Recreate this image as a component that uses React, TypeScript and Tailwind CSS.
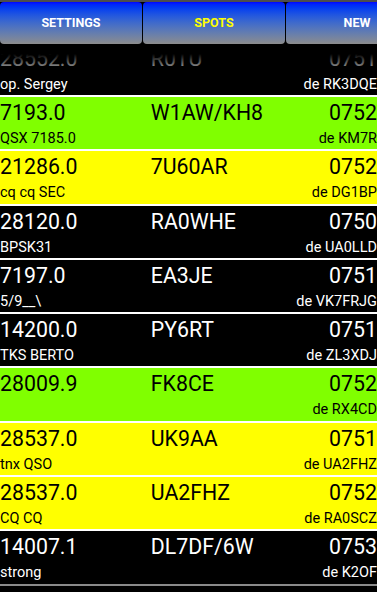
import React from "react";

type Spot = {
  freq: string;
  call: string;
  time: string;
  comment: string;
  de: string;
  color: "black" | "green" | "yellow";
};

const spots: Spot[] = [
  { freq: "28552.0", call: "R0TU", time: "0751", comment: "op. Sergey", de: "de RK3DQE", color: "black" },
  { freq: "7193.0", call: "W1AW/KH8", time: "0752", comment: "QSX 7185.0", de: "de KM7R", color: "green" },
  { freq: "21286.0", call: "7U60AR", time: "0752", comment: "cq cq SEC", de: "de DG1BP", color: "yellow" },
  { freq: "28120.0", call: "RA0WHE", time: "0750", comment: "BPSK31", de: "de UA0LLD", color: "black" },
  { freq: "7197.0", call: "EA3JE", time: "0751", comment: "5/9__\\", de: "de VK7FRJG", color: "black" },
  { freq: "14200.0", call: "PY6RT", time: "0751", comment: "TKS BERTO", de: "de ZL3XDJ", color: "black" },
  { freq: "28009.9", call: "FK8CE", time: "0752", comment: "", de: "de RX4CD", color: "green" },
  { freq: "28537.0", call: "UK9AA", time: "0751", comment: "tnx QSO", de: "de UA2FHZ", color: "yellow" },
  { freq: "28537.0", call: "UA2FHZ", time: "0752", comment: "CQ CQ", de: "de RA0SCZ", color: "yellow" },
  { freq: "14007.1", call: "DL7DF/6W", time: "0753", comment: "strong", de: "de K2OF", color: "black" },
];

const rowColor: Record<Spot["color"], string> = {
  black: "bg-black text-white",
  green: "bg-[#80ff00] text-black",
  yellow: "bg-[#ffff00] text-black",
};

function Row({ s }: { s: Spot }) {
  return (
    <div className={`h-[52.25px] pt-[4px] ${rowColor[s.color]}`}>
      <div className="grid grid-cols-[40%_1fr_auto] text-[21.3px] leading-[24px] whitespace-nowrap">
        <span>{s.freq}</span>
        <span>{s.call}</span>
        <span className="text-right">{s.time}</span>
      </div>
      <div className="mt-[5px] flex justify-between text-[14.5px] leading-[18px] whitespace-nowrap">
        <span>{s.comment}</span>
        <span>{s.de}</span>
      </div>
    </div>
  );
}

function TabButton({ label, active }: { label: string; active?: boolean }) {
  return (
    <div
      className={`w-[142px] h-[42px] shrink-0 rounded-[4px] bg-gradient-to-b from-[#0000ff] to-[#8c8c8c] flex items-center justify-center text-[12.5px] font-bold ${
        active ? "text-[#ffff00]" : "text-white"
      }`}
    >
      {label}
    </div>
  );
}

export default function App() {
  return (
    <div className="h-[592px] w-full bg-black overflow-hidden font-['Roboto',sans-serif]">
      <div className="h-[44px] border-t-2 border-[#4d4d4d] bg-black flex gap-[1px] overflow-hidden">
        <TabButton label="SETTINGS" />
        <TabButton label="SPOTS" active />
        <TabButton label="NEW" />
      </div>
      <div className="relative h-[548px] overflow-hidden">
        <div className="-mt-[1.25px]">
          {spots.map((s, i) => (
            <React.Fragment key={i}>
              {i > 0 && <div className="h-[2px] bg-white" />}
              <Row s={s} />
            </React.Fragment>
          ))}
          <div className="mt-[0.75px] h-[2px] bg-[#8a8a8a]" />
        </div>
        <div className="pointer-events-none absolute inset-x-0 top-0 h-[36px] bg-[linear-gradient(to_bottom,#000_0px,#000_10px,rgba(0,0,0,0)_34px)]" />
      </div>
    </div>
  );
}
